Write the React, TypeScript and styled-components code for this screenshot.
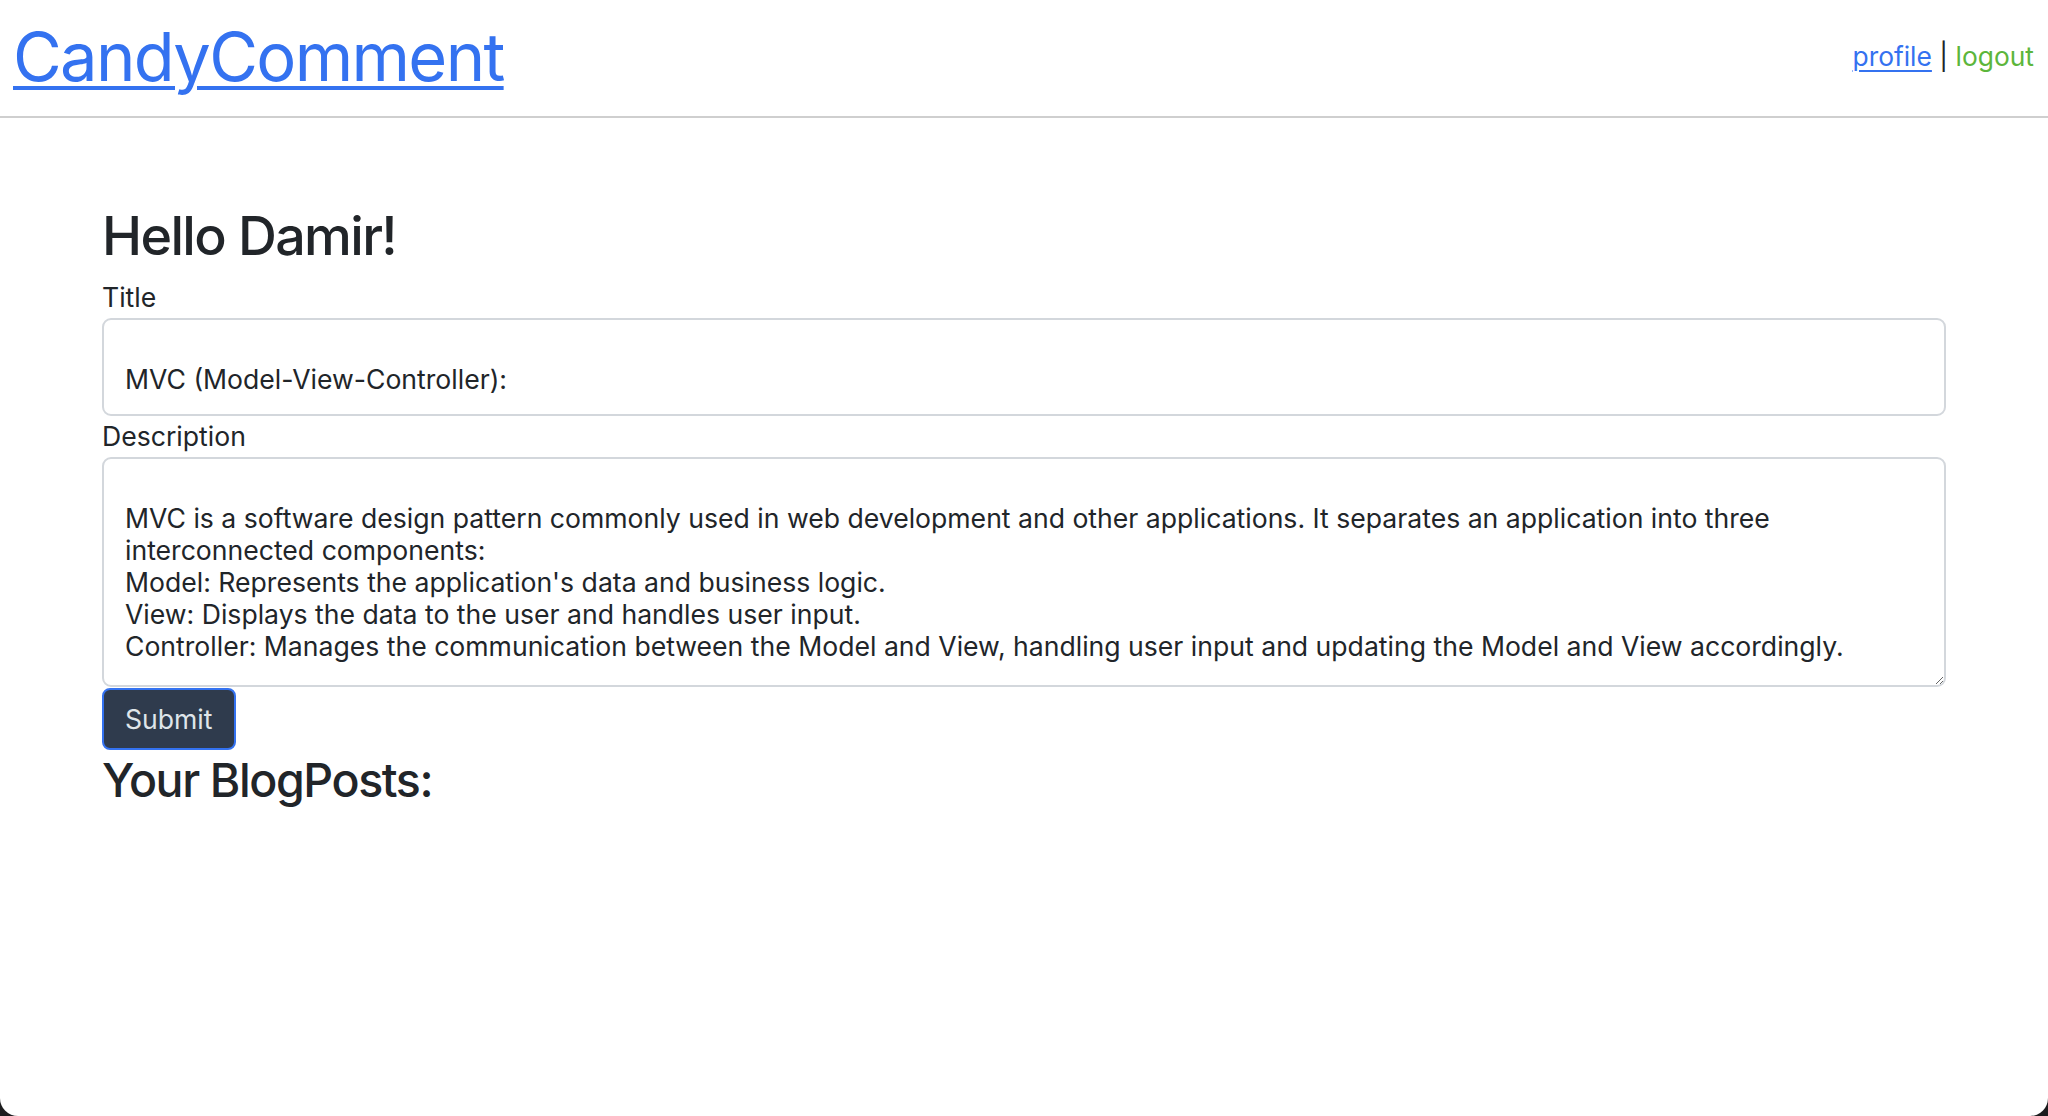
import React from "react";
import styled, { createGlobalStyle } from "styled-components";

const GlobalStyle = createGlobalStyle`
  html, body {
    margin: 0;
    padding: 0;
    background: #1c1c1e;
  }
  body {
    font-family: Inter, "Liberation Sans", Arial, sans-serif;
    color: #212529;
  }
  * { box-sizing: border-box; }
`;

const Window = styled.div`
  min-height: 100vh;
  background: #ffffff;
  border-radius: 0 0 18px 18px;
  overflow: hidden;
`;

const Header = styled.header`
  display: flex;
  align-items: center;
  justify-content: space-between;
  padding: 16px 14px 18px 13px;
  border-bottom: 2px solid #cfcfcf;
`;

const Brand = styled.h1`
  margin: 0;
  font-size: 66.8px;
  font-weight: 400;
  line-height: 82px;
  letter-spacing: -0.025em;
`;

const BrandLink = styled.a`
  color: #3472f0;
  text-decoration: underline;
  text-decoration-thickness: 4px;
  text-underline-offset: 5px;
`;

const Nav = styled.nav`
  font-size: 26.4px;
  line-height: 1.5;
  color: #212529;
`;

const NavLink = styled.a<{ $tone: "blue" | "green" }>`
  color: ${(p) => (p.$tone === "blue" ? "#3472f0" : "#5cb63b")};
  text-decoration: ${(p) => (p.$tone === "blue" ? "underline" : "none")};
  text-decoration-thickness: 2px;
  text-underline-offset: 4px;
`;

const Main = styled.main`
  padding: 85px 102px 40px;
`;

const Greeting = styled.h2`
  margin: 0 0 9px;
  font-size: 53.8px;
  font-weight: 500;
  line-height: 65px;
  letter-spacing: -0.03em;
  color: #212529;
`;

const Form = styled.form`
  display: flex;
  flex-direction: column;
  align-items: flex-start;
`;

const Label = styled.label`
  display: block;
  font-size: 26.6px;
  line-height: 40.8px;
  color: #212529;
`;

const Field = styled.textarea<{ $h: number; $resizable?: boolean }>`
  display: block;
  width: 100%;
  height: ${(p) => p.$h}px;
  padding: 11px 21px;
  border: 2px solid #d3d7dc;
  border-radius: 9px;
  background: #ffffff;
  font-family: Inter, "Liberation Sans", Arial, sans-serif;
  font-size: 26.6px;
  line-height: 32px;
  color: #212529;
  resize: ${(p) => (p.$resizable ? "vertical" : "none")};
  overflow: hidden;
  outline: none;
`;

const SubmitButton = styled.button`
  margin-top: 1px;
  padding: 9px 21px;
  border: 2px solid #3472f0;
  border-radius: 8px;
  background: #2f3b4d;
  color: #dfe5ea;
  font-family: Inter, "Liberation Sans", Arial, sans-serif;
  font-size: 26.6px;
  line-height: 40.8px;
  cursor: pointer;
`;

const SectionTitle = styled.h3`
  margin: 2px 0 0;
  font-size: 46.5px;
  font-weight: 500;
  line-height: 57px;
  letter-spacing: -0.03em;
  color: #212529;
`;

const description =
  "\nMVC is a software design pattern commonly used in web development and other applications. It separates an application into three interconnected components:\nModel: Represents the application's data and business logic.\nView: Displays the data to the user and handles user input.\nController: Manages the communication between the Model and View, handling user input and updating the Model and View accordingly.";

export default function App() {
  return (
    <>
      <GlobalStyle />
      <Window>
        <Header>
          <Brand>
            <BrandLink href="#">CandyComment</BrandLink>
          </Brand>
          <Nav>
            <NavLink $tone="blue" href="#">profile</NavLink>
            {" | "}
            <NavLink $tone="green" href="#">logout</NavLink>
          </Nav>
        </Header>
        <Main>
          <Greeting>Hello Damir!</Greeting>
          <Form onSubmit={(e) => e.preventDefault()}>
            <Label>Title</Label>
            <Field $h={98} readOnly defaultValue={"\nMVC (Model-View-Controller):"} />
            <Label>Description</Label>
            <Field $h={230} $resizable readOnly defaultValue={description} />
            <SubmitButton type="submit">Submit</SubmitButton>
          </Form>
          <SectionTitle>Your BlogPosts:</SectionTitle>
        </Main>
      </Window>
    </>
  );
}
